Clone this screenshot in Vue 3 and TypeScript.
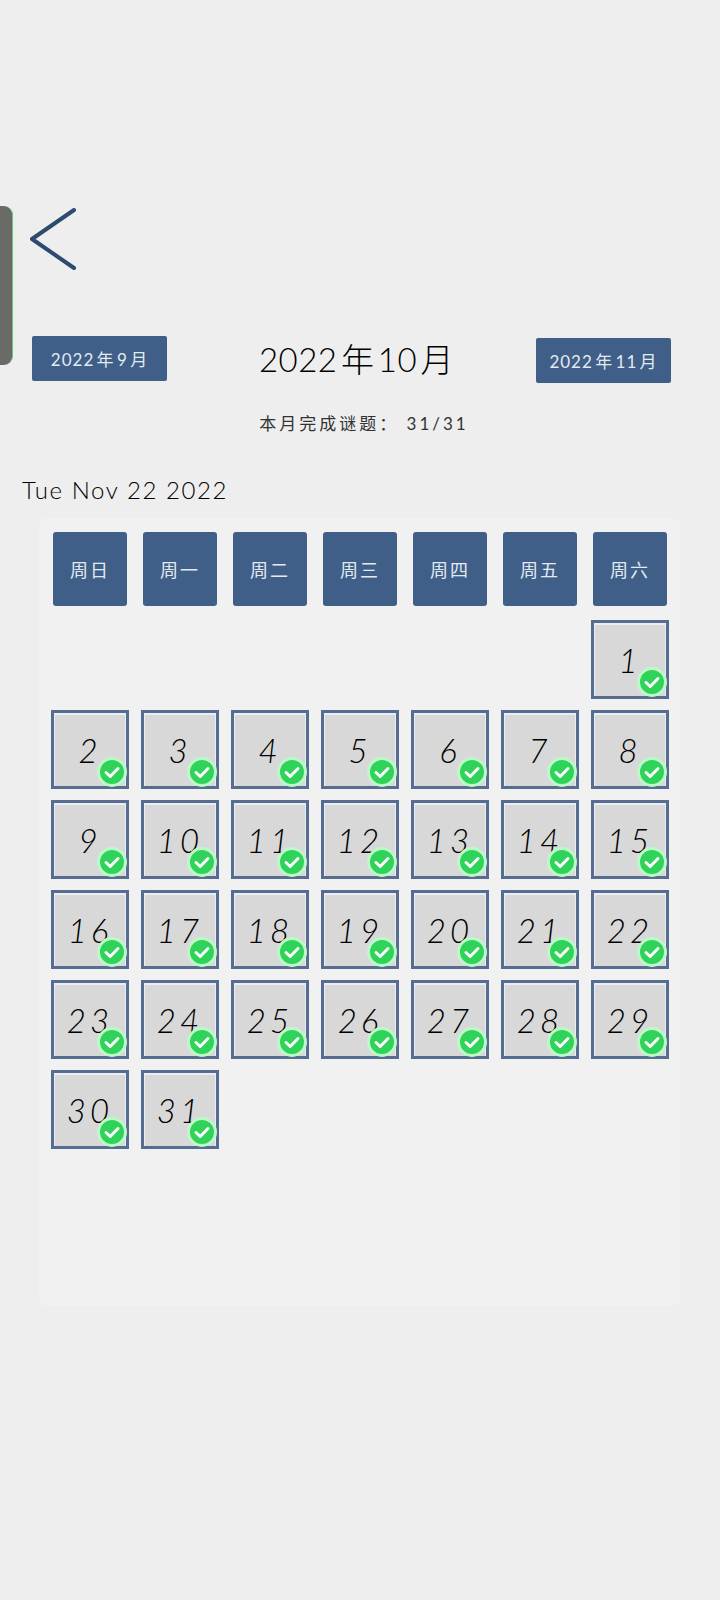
<script setup lang="ts">
const weekdays = ['周日', '周一', '周二', '周三', '周四', '周五', '周六'];
const blanks = 6;
const days = Array.from({ length: 31 }, (_, i) => i + 1);
</script>

<template>
  <div class="page">
    <div class="side-tab"></div>

    <svg class="back" viewBox="0 0 50 66" fill="none" stroke="#2d4a6f" stroke-width="4" stroke-linecap="round" stroke-linejoin="round">
      <path d="M45 4 3 33 45 62" />
    </svg>

    <div class="nav">
      <button type="button" class="month-btn">2022 年 9 月</button>
      <h1 class="title">2022 年 10 月</h1>
      <button type="button" class="month-btn next">2022 年 11 月</button>
    </div>

    <p class="progress">本月完成谜题： 31/31</p>
    <p class="today">Tue Nov 22 2022</p>

    <section class="panel">
      <div class="grid head">
        <div v-for="d in weekdays" :key="d" class="weekday">{{ d }}</div>
      </div>
      <div class="grid body">
        <div v-for="n in blanks" :key="'b' + n"></div>
        <div v-for="day in days" :key="day" class="day">
          <span class="num">{{ day }}</span>
          <span class="badge">
            <svg viewBox="0 0 24 24" fill="none" stroke="#fff" stroke-width="3" stroke-linecap="round" stroke-linejoin="round">
              <path d="M6 12.5l4.2 4L18 8.5" />
            </svg>
          </span>
        </div>
      </div>
    </section>
  </div>
</template>

<style>
html, body { background: #eeeeee; }
</style>

<style scoped>
.page {
  position: relative;
  width: 720px;
  height: 1600px;
  padding-top: 206px;
  box-sizing: border-box;
  overflow: hidden;
  background: #eeeeee;
  font-family: Lato, "Noto Sans CJK SC", sans-serif;
  color: #1c1c1c;
}

.side-tab {
  position: absolute;
  left: -12px;
  top: 206px;
  width: 24px;
  height: 159px;
  background: #6a6a66;
  border-right: 1px solid #5fc47d;
  border-radius: 9px;
}

.back { display: block; width: 50px; height: 66px; margin-left: 29px; }

.nav {
  display: flex;
  justify-content: space-between;
  align-items: flex-start;
  margin-top: 64px;
  padding: 0 49px 0 32px;
}

.month-btn {
  width: 135px;
  height: 45px;
  padding: 0;
  border: none;
  border-radius: 2px;
  background: #3f5f88;
  color: #e4eaf2;
  font: 400 17px Lato, "Noto Sans CJK SC", sans-serif;
  letter-spacing: 1px;
  word-spacing: -3px;
}
.month-btn.next { margin-top: 2px; }

.title {
  margin: 0 0 0 10px;
  height: 47px;
  font-size: 33px;
  line-height: 47px;
  font-weight: 300;
  letter-spacing: 0.5px;
  word-spacing: -6px;
  color: #000;
}

.progress {
  margin: 26px 0 0 8px;
  height: 30px;
  text-align: center;
  font-size: 17px;
  line-height: 30px;
  font-weight: 400;
  letter-spacing: 3px;
  color: #333;
}

.today {
  margin: 34px 0 0 22px;
  height: 34px;
  font-size: 24px;
  line-height: 34px;
  font-weight: 300;
  letter-spacing: 1.6px;
  color: #000;
}

.panel {
  margin: 11px 0 0 39px;
  width: 641px;
  height: 788px;
  box-sizing: border-box;
  padding: 14px 0 0 6px;
  background: #f2f1f2;
  border-radius: 8px;
}

.grid {
  display: grid;
  grid-template-columns: repeat(7, 90px);
  justify-items: center;
}
.head { margin-bottom: 14px; }
.body { row-gap: 11px; }

.weekday {
  width: 74px;
  height: 74px;
  display: flex;
  align-items: center;
  justify-content: center;
  background: #3f5f88;
  border-radius: 3px;
  color: #e4eaf2;
  font-size: 18px;
  font-weight: 400;
  letter-spacing: 2px;
}

.day {
  position: relative;
  width: 78px;
  height: 79px;
  box-sizing: border-box;
  display: flex;
  align-items: center;
  justify-content: center;
  background: #d8d8d8;
  border: 3px solid #566c90;
  box-shadow: inset 0 2px 0 #e9eef6, inset 1px 0 0 #e9eef6, inset -1px 0 0 #e9eef6;
}

.num {
  font-size: 33px;
  font-style: italic;
  font-weight: 300;
  letter-spacing: 4px;
  color: #000;
}

.badge {
  position: absolute;
  right: -1px;
  bottom: -1px;
  width: 24px;
  height: 24px;
  display: flex;
  background: #2fd35a;
  border: 3px solid #bdf8c8;
  border-radius: 50%;
}
.badge svg { width: 24px; height: 24px; }
</style>
